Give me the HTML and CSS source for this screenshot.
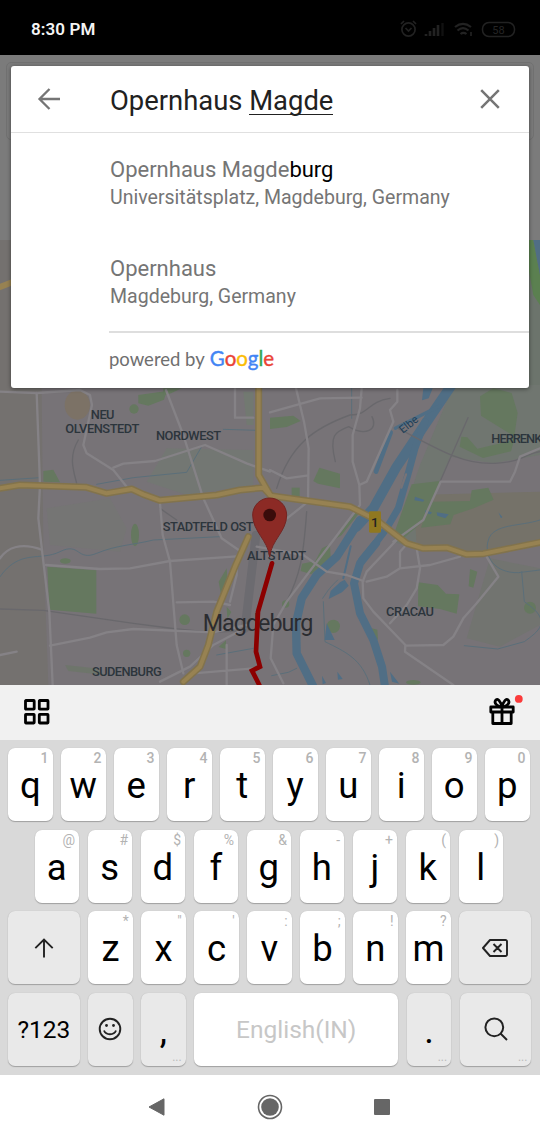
FILE: index.html
```
<!DOCTYPE html>
<html lang="en">
<head>
<meta charset="utf-8">
<title>Place search</title>
<link rel="stylesheet" href="styles.css">
</head>
<body>
<div class="phone">
  <header class="status">
    <span class="clock">8:30 PM</span>
    <svg class="status-icons" width="120" height="24" viewBox="0 0 120 24" fill="none" stroke="#222" stroke-width="1.7">
      <circle cx="12.500" cy="12.500" r="6.600"/><path d="M9.500 11l3 3 3-3M5 7l3-3M20 7l-3-3"/>
      <path d="M30 19v-2M34 19v-5M38 19v-8M42 19V8" stroke-width="2.600"/><path d="M46.500 19V6" stroke="#111" stroke-width="2.400"/>
      <path d="M59 10c5-4 11-4 16 0M61.500 13.500c3.500-3 7.500-3 11 0M64.500 17c2-1.600 4-1.600 6 0" stroke-width="2.200"/><path d="M75 15v4" />
      <rect x="86.500" y="5.500" width="32" height="14" rx="6.500" stroke-width="1.500"/>
      <text class="battery" x="102.500" y="16.500" text-anchor="middle">58</text>
    </svg>
  </header>

  <main class="stage">
    <div class="page-top"><div class="page-field"></div></div>
    <svg class="map" width="540" height="445" viewBox="0 -435 1620 1335" fill="none" stroke-linecap="round" stroke-linejoin="round">
      <rect x="0" y="-435" width="1620" height="1335" fill="#777377"/>
      <path d="M0-435H120L130 480 145 900H0z" fill="#74716f"/>
      <path d="M1360 0H1620V210L1480 235 1350 215 1240 490 1180 470 1260 240z" fill="#707670"/>
      <path d="M1240 330L1620 320V470L1400 505 1250 480z" fill="#757269"/>
      <path d="M1470 520L1620 550V720L1500 785 1400 760z" fill="#727470"/>
      <path d="M1520-435H1620V0H1520z" fill="#6c746c"/>
      <path d="M1570-435H1600L1620-330V-240L1600-270z" fill="#5b8050"/>
      <path d="M1600-435H1620V-330z" fill="#506e85"/>
      <g fill="#727971">
        <path d="M500 190L760 195V300L560 330 440 290z" opacity=".6"/><path d="M140 370L330 340 380 430 360 500 150 480z" opacity=".4"/>
        <path d="M730 20L760 20 760 120 740 120z"/>
      </g>
      <ellipse cx="232" cy="60" rx="38" ry="44" fill="#7c7266"/>
      <g fill="#65785f">
        <path d="M142 545L289 556V686L148 674z"/><path d="M415 30L500 18 492 44 445 62 415 55z"/><path d="M490 10h55l-30 14-25 8z"/>
        <circle cx="402" cy="72" r="14"/><path d="M130 258l30-4 20 38-50-2z"/><ellipse cx="405" cy="450" rx="12" ry="34"/>
        <ellipse cx="196" cy="528" rx="16" ry="8"/><circle cx="554" cy="704" r="16"/><circle cx="560" cy="805" r="11"/>
        <path d="M680 550l-24 40 8 44 20-26zM678 766v26l-22-6zM680 665l14 16-12 20z"/>
        <path d="M195 840l90 10 30 20-110-12z" opacity=".5"/>
        <path d="M810 98l70-6 22 16-42 18-50 6z"/><path d="M958 248l62 18v44l-66-14-14-8z"/><path d="M875 308h24v28h-24z"/>
        <path d="M990 478l2 40-58 50-32-10 4-22 40-8 20-38z"/><path d="M1085 375l-60 75-15 10 60-82z"/>
        <path d="M1440 34l40-24 55 14 18 60-10 70-100-62z"/><path d="M1384 155l18 2 30 34 95-22 20-20-14 50-84 20-70-34z"/>
        <path d="M1235 298l84-10-36 110-82 70-16-30z"/><path d="M1290 350l120-2 5-32 50-8 16 36-60 26-60 20-10 28-88 10z"/>
        <path d="M1255 592l58 8 25 26 40 2-8 58-50-14-66-8z"/><path d="M1410 552l22 8-12 48-14-4z"/>
        <circle cx="1590" cy="668" r="18"/><circle cx="1000" cy="724" r="20"/><circle cx="857" cy="657" r="11"/><path d="M1116 730l16 4 2 30-12-2z"/><ellipse cx="1240" cy="892" rx="22" ry="7"/>
      </g>
      <g stroke="#5b6f7a" stroke-width="3">
        <path d="M0 286L60 282 120 278M290 298L400 278 560 262 605 185"/>
        <path d="M0 575C60 490 120 530 180 500S230 530 290 505 400 480 460 465L660 455M650 810L760 790M670 133L770 136"/>
        <path d="M1055 0v100M1620 405C1560 425 1480 415 1465 465s20 100 90 98l65-8M1565 560l8 90c90 60 40 90 0 120l-80 22-100-10"/>
        <path d="M968 640c20-30 20-30 45-55M970 650l5 120c60 30 110 50 135 130M815 872l50-10 25-12"/>
      </g>
      <g stroke="#506e85">
        <path d="M1355 0L1275 118 1190 245 1120 370 1070 425" stroke-width="30"/>
        <path d="M1080 405L1010 515 950 570 905 640 888 715 890 805 940 905" stroke-width="25"/>
        <path d="M1275 110L1245 190 1222 275 1195 370 1160 430 1130 470 1085 525" stroke-width="21"/>
        <path d="M1128 475L1080 535 1062 595 1080 685 1120 765 1146 845 1155 905" stroke-width="24"/>
        <path d="M1172 142L1128 260" stroke-width="14"/><path d="M1186 130L1320 62" stroke-width="10"/>
        <path d="M1052 484L1030 580" stroke-width="6"/>
      </g>
      <g fill="#506e85">
        <path d="M1270 10h28l-12 30-20 6z"/><path d="M1034 584l12 18-20 20-40 20 6-24 28-26zM980 715l24 50h-30zM966 872l12 22-10 4zM1012 860l16 22-14 2zM1170 860l28 36-22-6z"/>
        <path d="M1245 335l28 10-4 5-26-4zM1276 376l20 6-4 6-16-4zM1310 382l36 6-10 12-24-8zM1495 382l12 14-4 4z"/>
      </g>
      <path d="M1218 268L1204 308" stroke="#777377" stroke-width="7"/>
      <g stroke="#69686c" stroke-width="4">
        <path d="M0 672L130 676 400 715 530 732 640 742 760 735M235 165c-30 50-15 90-5 130M480 370l50 35"/>
        <path d="M1404 98L1320 290M830 310c40-130 110-180 220-220 60 0 50-40 120-50M1195 130c130 70 200 110 290 105s90-30 135-35M860 650c40-80 50-130 60-270"/>
        <path d="M1006 230c-20-80 0-90 40-105 50 30 90 10 70-30"/>
      </g>
      <path d="M768 450L735 730" stroke="#6c6b70" stroke-width="26"/>
      <g stroke="#858286" stroke-width="7">
        <path d="M0 20L110 24 240 15 270 30 276 60 250 180 260 205 340 255 380 305"/>
        <path d="M110 24L120 300 115 400 130 530 148 680 158 900"/>
        <path d="M0 520C20 490 60 470 125 494M138 540L300 552 390 550 510 528 710 514M340 248L370 236 465 228 615 180 740 235 810 260"/>
        <path d="M498 15L550 150 610 340 665 460 730 505M480 355L488 450 510 530 530 780 550 865M530 652L640 650 690 660"/>
        <path d="M150 782L270 758 320 742 400 732 640 742 740 720M480 890L570 845 640 780 735 730M710 514L710 570 690 650M580 865L760 850M680 780V900"/>
        <path d="M705 10V98H760M0 810l50-10M770 485l140 25M735 480L710 514"/>
        <path d="M810 82L960 40 1085 38M888 10L912 110 926 190 924 350 830 425M810 255l50 25 60-8"/>
        <path d="M1085 10L1080 70 1058 150V230L1078 300 1080 360 860 650 820 720 812 820 850 895M1078 300L1100 290 1180 110 1170 75 1192 50V15"/>
        <path d="M1190 465L1100 560 1088 590 1090 640 1120 680 1216 780 1215 800 1360 900M1220 478L1200 500 1200 545M1100 590L1160 575 1200 550 1290 540 1380 515M1250 490L1260 550 1250 610 1220 660 1170 715M1216 782L1330 780 1360 755 1390 700 1430 655 1495 575 1460 515"/>
        <path d="M910 510L980 560 1040 570 1090 588M1180 470L1270 405 1322 290H1530L1545 260 1560 215 1620 190"/>
      </g>
      <g stroke="#82734c" stroke-width="21">
        <path d="M0 310L60 300 260 307 320 325 395 312 430 328 480 346 650 330 720 315 790 308 812 332 1050 365 1130 405 1220 475 1270 490 1340 488 1400 508 1450 506 1620 472"/>
        <path d="M776-435V270L812 332M745 455L705 545 650 680 625 780 600 845 550 890"/>
      </g>
      <g stroke="#978252" stroke-width="12">
        <path d="M0 310L60 300 260 307 320 325 395 312 430 328 480 346 650 330 720 315 790 308 812 332 1050 365 1130 405 1220 475 1270 490 1340 488 1400 508 1450 506 1620 472"/>
        <path d="M776-435V270L812 332M745 455L705 545 650 680 625 780 600 845 550 890"/>
      </g>
      <path d="M-5-292L40-310" stroke="#978252" stroke-width="18"/>
      <rect x="1107" y="379" width="36" height="64" rx="4" fill="#907820"/>
      <text class="road-no" x="1124" y="425" text-anchor="middle">1</text>
      <g class="district">
        <text x="308" y="101" text-anchor="middle" textLength="71">NEU</text>
        <text x="196" y="145" textLength="222">OLVENSTEDT</text>
        <text x="468" y="165" textLength="195">NORDWEST</text>
        <text x="488" y="438" textLength="273">STADTFELD OST</text>
        <text x="741" y="524" textLength="177">ALTSTADT</text>
        <text x="276" y="872" textLength="209">SUDENBURG</text>
        <text x="1158" y="693" textLength="144">CRACAU</text>
        <text x="1474" y="174" textLength="153">HERRENK</text>
      </g>
      <text class="river" transform="translate(1208 146) rotate(-38)">Elbe</text>
      <text class="city" x="608" y="738" textLength="332">Magdeburg</text>
      <path d="M816 535L774 680 768 800 780 845 756 857 778 900" stroke="#8c0000" stroke-width="14" stroke-linejoin="miter"/>
      <path d="M809 515C804 465 758 440 758 390a51 51 0 0 1 102 0C860 440 814 465 809 515z" fill="#8c2a25" stroke="#742522" stroke-width="3"/>
      <circle cx="809" cy="390" r="19" fill="#3a0c0b"/>
    </svg>

    <section class="card">
      <div class="search">
        <svg width="24" height="24" viewBox="0 0 24 24" fill="none" stroke="#757575" stroke-width="2.300"><path d="M23 12H3M12.500 2L2.500 12 12.500 22"/></svg>
        <div class="query">Opernhaus <span class="composing">Magde</span></div>
        <svg width="20" height="20" viewBox="0 0 20 20" fill="none" stroke="#757575" stroke-width="2.500"><path d="M1.200 1.200l17.600 17.600M18.800 1.200L1.200 18.800"/></svg>
      </div>
      <div class="results">
        <div class="result"><div class="name">Opernhaus Magde<span class="rest">burg</span></div><div class="place">Universitätsplatz, Magdeburg, Germany</div></div>
        <div class="result last"><div class="name">Opernhaus</div><div class="place">Magdeburg, Germany</div></div>
        <div class="credit"><span class="powered">powered by</span><span class="google"><span class="blue">G</span><span class="red">o</span><span class="yellow">o</span><span class="blue">g</span><span class="green">l</span><span class="red">e</span></span></div>
      </div>
    </section>
  </main>

  <div class="toolbar">
    <svg width="26" height="26" viewBox="0 0 26 26" fill="none" stroke="#000" stroke-width="2.800"><rect x="1.500" y="1.500" width="8.700" height="8.700" rx=".4"/><rect x="15.300" y="1.500" width="8.700" height="8.700" rx=".4"/><rect x="1.500" y="15.300" width="8.700" height="8.700" rx=".4"/><rect x="15.300" y="15.300" width="8.700" height="8.700" rx=".4"/></svg>
    <svg class="gift" width="36" height="34" viewBox="0 0 36 34" fill="none" stroke="#000" stroke-width="2.800" stroke-linejoin="round"><rect x="2.800" y="12" width="22.400" height="5"/><path d="M4.800 17V28.500h18.400V17M14 12v16M14 12C11 12 5.500 9 7.500 5.500S13 7 14 12c1-5 4.500-10 6.500-6.500S17 12 14 12z"/><circle cx="30.800" cy="3.900" r="3.900" fill="#fb3b3b" stroke="none"/></svg>
  </div>

  <div class="keyboard">
    <div class="row">
      <div class="key">q<span class="alt digit">1</span></div><div class="key">w<span class="alt digit">2</span></div><div class="key">e<span class="alt digit">3</span></div><div class="key">r<span class="alt digit">4</span></div><div class="key">t<span class="alt digit">5</span></div><div class="key">y<span class="alt digit">6</span></div><div class="key">u<span class="alt digit">7</span></div><div class="key">i<span class="alt digit">8</span></div><div class="key">o<span class="alt digit">9</span></div><div class="key">p<span class="alt digit">0</span></div>
    </div>
    <div class="row row-inset">
      <div class="key">a<span class="alt">@</span></div><div class="key">s<span class="alt">#</span></div><div class="key">d<span class="alt">$</span></div><div class="key">f<span class="alt">%</span></div><div class="key">g<span class="alt">&amp;</span></div><div class="key">h<span class="alt">-</span></div><div class="key">j<span class="alt">+</span></div><div class="key">k<span class="alt">(</span></div><div class="key">l<span class="alt">)</span></div>
    </div>
    <div class="row">
      <div class="key fn wide"><svg width="20" height="20" viewBox="0 0 20 20" fill="none" stroke="#222" stroke-width="1.900"><path d="M10 19.500V2M1.300 10.200L10 1.500l8.700 8.700"/></svg></div>
      <div class="key">z<span class="alt">*</span></div><div class="key">x<span class="alt">"</span></div><div class="key">c<span class="alt">'</span></div><div class="key">v<span class="alt">:</span></div><div class="key">b<span class="alt">;</span></div><div class="key">n<span class="alt">!</span></div><div class="key">m<span class="alt">?</span></div>
      <div class="key fn wide"><svg width="26" height="18" viewBox="0 0 26 18" fill="none" stroke="#222" stroke-width="1.900" stroke-linejoin="round"><path d="M8 1h15.500a1.500 1.500 0 0 1 1.500 1.500v13a1.500 1.500 0 0 1-1.500 1.500H8L1 9zM11.500 5l8 8M19.500 5l-8 8"/></svg></div>
    </div>
    <div class="row">
      <div class="key fn wide symbols">?123</div>
      <div class="key fn"><svg width="24" height="24" viewBox="0 0 24 24" fill="none" stroke="#222" stroke-width="1.900"><circle cx="12" cy="12" r="10.300"/><path d="M6 13.500c2 5 10 5 12 0"/><circle cx="8.500" cy="8.500" r="1.400" fill="#222" stroke="none"/><circle cx="15.500" cy="8.500" r="1.400" fill="#222" stroke="none"/></svg></div>
      <div class="key fn punct">,<span class="more">...</span></div>
      <div class="key space">English(IN)</div>
      <div class="key fn punct">.<span class="more">...</span></div>
      <div class="key fn wide"><svg width="24" height="24" viewBox="0 0 24 24" fill="none" stroke="#222" stroke-width="2"><circle cx="10.300" cy="10.300" r="8.900"/><path d="M16.500 16.500l6.500 6.500"/></svg><span class="more">...</span></div>
    </div>
  </div>

  <nav class="nav">
    <svg width="17" height="18" viewBox="0 0 17 18"><path d="M1 9L16 .8v16.400z" fill="#666" stroke="#666" stroke-linejoin="round"/></svg>
    <svg width="26" height="26" viewBox="0 0 26 26"><circle cx="13" cy="13" r="11.500" fill="none" stroke="#666" stroke-width="1.600"/><circle cx="13" cy="13" r="8.800" fill="#666"/></svg>
    <svg width="16" height="16" viewBox="0 0 16 16"><rect width="16" height="16" rx="1" fill="#666"/></svg>
  </nav>
</div>
</body>
</html>
```
FILE: styles.css
```
* { box-sizing: border-box; }
body { margin: 0; font-family: Roboto, sans-serif; background: #fff; }
svg { display: block; flex: none; }
.phone { width: 540px; height: 1140px; display: flex; flex-direction: column; overflow: hidden; }

.status { height: 55px; background: #000; display: flex; align-items: center; justify-content: space-between; padding: 3px 24px 0 31px; }
.clock { color: #f4f4f4; font-size: 17px; font-weight: 600; letter-spacing: 0.1px; }
.battery { font-size: 11px; fill: #252525; stroke: none; }

.stage { height: 630px; position: relative; }
.page-top { height: 185px; background: #7b7b7b; padding: 7px 6px; }
.page-field { height: 78px; border: 1px solid #717171; border-radius: 5px; }
.district { font-size: 38.500px; font-weight: 500; fill: #2c353c; }
.city { font-size: 70px; fill: #2b2c30; }
.road-no { font-size: 40px; font-weight: 500; fill: #222; }
.river { font-size: 33px; fill: #203f58; }

.card { position: absolute; left: 11px; top: 11px; width: 518px; height: 322px; background: #fff; border-radius: 3px; box-shadow: 0 1px 4px rgba(0,0,0,.45); overflow: hidden; }
.search { height: 67px; border-bottom: 1px solid #e0e0e0; display: flex; align-items: center; padding: 0 29px 0 26px; }
.query { flex: 1; margin-left: 49px; padding-top: 3px; font-size: 27.400px; line-height: 32px; color: #212121; white-space: nowrap; }
.composing { border-bottom: 1px solid #212121; display: inline-block; line-height: 25px; }
.results { padding: 22px 0 0 99px; }
.result { height: 99px; color: #757575; }
.last { height: 77px; }
.name { font-size: 22px; line-height: 30px; }
.rest { color: #000; }
.place { font-size: 19.550px; line-height: 25px; }
.credit { height: 56px; border-top: 2px solid #dedede; display: flex; align-items: baseline; gap: 5px; padding-top: 13px; margin-left: -1px; font-family: Lato, sans-serif; }
.powered { font-size: 18.500px; color: #6f6f6f; }
.google { font-size: 20.500px; -webkit-text-stroke: .4px; }
.blue { color: #4285f4; }
.red { color: #ea4335; }
.yellow { color: #fbbc05; }
.green { color: #34a853; }

.toolbar { height: 55px; background: #f1f1f1; display: flex; align-items: center; justify-content: space-between; padding: 0 16px 1px 24px; }

.keyboard { height: 335px; background: #d9d9d9; padding: 8px 8px 0; display: flex; flex-direction: column; gap: 8.500px; }
.row { display: flex; gap: 8.500px; height: 73px; }
.row-inset { padding-left: 26.500px; }
.key { position: relative; width: 44.500px; height: 73px; padding-top: 4px; background: #fff; border-radius: 7px; box-shadow: 0 1px 1px #a0a0a0, 0 0 1px #b8b8b8; display: flex; align-items: center; justify-content: center; font-size: 36.500px; color: #000; line-height: 1; }
.fn { background: #e9e9e9; padding-top: 0; }
.wide { width: 71.700px; }
.alt { position: absolute; top: 3px; right: 4px; font-size: 14px; color: #b3b3b3; line-height: 14px; }
.digit { font-weight: 500; }
.symbols { font-size: 24.500px; padding-top: 2px; }
.space { width: 204px; font-size: 24.500px; color: #c7c7c7; padding-top: 2px; }
.punct { padding-top: 4px; }
.more { position: absolute; bottom: 4px; right: 4px; font-size: 12px; line-height: 10px; color: #bbb; }

.nav { height: 65px; background: #fff; display: flex; align-items: center; justify-content: space-between; padding: 0 150px 1px 148px; }
```
